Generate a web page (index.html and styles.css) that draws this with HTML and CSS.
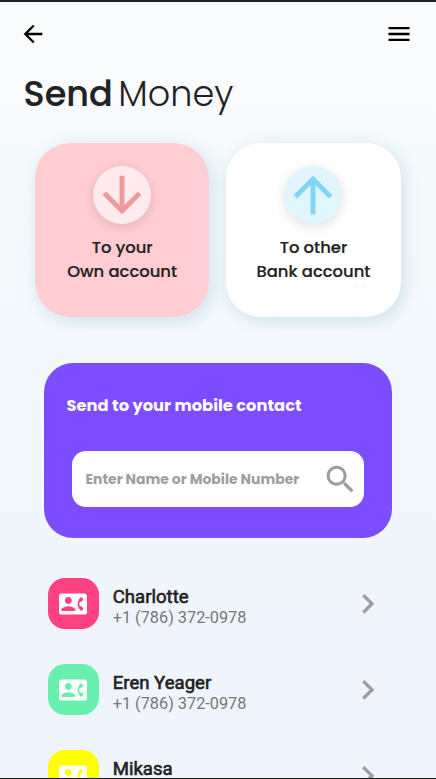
FILE: index.html
```html
<!DOCTYPE html>
<html lang="en">
<head>
<meta charset="utf-8">
<title>Send Money</title>
<link rel="stylesheet" href="styles.css">
</head>
<body>
<svg width="0" height="0" class="sprite">
  <symbol id="contact" viewBox="0 0 24 24"><path d="M22 3H2C.9 3 0 3.9 0 5v14c0 1.1.9 2 2 2h20c1.1 0 1.99-.9 1.99-2L24 5c0-1.1-.9-2-2-2zM8 6c1.66 0 3 1.34 3 3s-1.34 3-3 3-3-1.34-3-3 1.34-3 3-3zm6 12H2v-1c0-2 4-3.1 6-3.1s6 1.1 6 3.1v1zm3.85-4h1.64L21 16l-1.99 1.99c-1.31-.98-2.28-2.38-2.73-3.99-.18-.64-.28-1.31-.28-2s.1-1.36.28-2c.45-1.62 1.42-3.01 2.73-3.99L21 8l-1.51 2h-1.64c-.22.63-.35 1.3-.35 2s.13 1.37.35 2z"/></symbol>
  <symbol id="chevron" viewBox="0 0 24 24"><path d="M10 6 8.59 7.41 13.17 12l-4.58 4.59L10 18l6-6z"/></symbol>
</svg>
<main class="screen">
  <header class="bar">
    <svg class="bar-icon" viewBox="0 0 24 24"><path d="M20 11H7.83l5.59-5.59L12 4l-8 8 8 8 1.41-1.41L7.83 13H20v-2z"/></svg>
    <svg class="bar-icon" viewBox="0 0 24 24"><path d="M3 18h18v-2H3v2zm0-5h18v-2H3v2zm0-7v2h18V6H3z"/></svg>
  </header>
  <h1 class="title"><span class="strong">Send</span><span class="light">Money</span></h1>
  <section class="cards">
    <div class="card pink">
      <div class="disc"><svg viewBox="0 0 24 24"><path d="M20 12l-1.41-1.41L13 16.17V4h-2v12.17l-5.58-5.59L4 12l8 8 8-8z"/></svg></div>
      <p class="label"><span>To your</span><span>Own account</span></p>
    </div>
    <div class="card white">
      <div class="disc"><svg viewBox="0 0 24 24"><path d="M4 12l1.41 1.41L11 7.83V20h2V7.83l5.58 5.59L20 12l-8-8-8 8z"/></svg></div>
      <p class="label"><span>To other</span><span>Bank account</span></p>
    </div>
  </section>
  <section class="panel">
    <h2 class="panel-title">Send to your mobile contact</h2>
    <div class="search">
      <span class="hint">Enter Name or Mobile Number</span>
      <svg class="search-icon" viewBox="0 0 24 24"><path d="M15.5 14h-.79l-.28-.27C15.41 12.59 16 11.11 16 9.5 16 5.91 13.09 3 9.5 3S3 5.91 3 9.5 5.91 16 9.5 16c1.61 0 3.09-.59 4.23-1.57l.27.28v.79l5 4.99L20.49 19l-4.99-5zm-6 0C7.01 14 5 11.99 5 9.5S7.01 5 9.5 5 14 7.01 14 9.5 11.99 14 9.5 14z"/></svg>
    </div>
  </section>
  <ul class="contacts">
    <li class="contact">
      <div class="avatar rose"><svg><use href="#contact"/></svg></div>
      <div class="who"><span class="name">Charlotte</span><span class="phone">+1 (786) 372-0978</span></div>
      <svg class="chevron"><use href="#chevron"/></svg>
    </li>
    <li class="contact">
      <div class="avatar mint"><svg><use href="#contact"/></svg></div>
      <div class="who"><span class="name">Eren Yeager</span><span class="phone">+1 (786) 372-0978</span></div>
      <svg class="chevron"><use href="#chevron"/></svg>
    </li>
    <li class="contact">
      <div class="avatar yellow"><svg><use href="#contact"/></svg></div>
      <div class="who"><span class="name">Mikasa</span></div>
      <svg class="chevron"><use href="#chevron"/></svg>
    </li>
  </ul>
</main>
</body>
</html>
```
FILE: styles.css
```css
* { box-sizing: border-box; margin: 0; padding: 0; }
html, body { height: 100%; overflow: hidden; }
body { font-family: Poppins, Inter, "Liberation Sans", sans-serif; color: #222; }
svg { display: block; flex: none; }
.sprite { position: absolute; }
.screen {
  width: 436px;
  height: 779px;
  overflow: hidden;
  display: flex;
  flex-direction: column;
  border-top: 2px solid #222226;
  border-bottom: 1px solid #1c1c1c;
  background: linear-gradient(#fafbfd 0, #f9fbfd 95px, #f4f9fc 150px, #f3f8fc 430px, #f0f5fd 620px, #eff4fd 100%);
}
.bar { display: flex; justify-content: space-between; padding: 18.3px 23.5px 0 18.5px; height: 47px; flex: none; }
.bar-icon { width: 28px; height: 28px; fill: #000; }
.title { display: flex; height: 93.5px; flex: none; padding: 23px 0 0 23.5px; font-size: 35px; line-height: 44px; white-space: nowrap; }
.strong { font-weight: 500; width: 94.8px; -webkit-text-stroke: .2px #222; }
.light { font-weight: 300; }
.cards { display: flex; gap: 17px; padding-left: 35px; flex: none; }
.card {
  width: 174.3px;
  height: 174.5px;
  border-radius: 35px;
  display: flex;
  flex-direction: column;
  align-items: center;
  padding-top: 23.5px;
  box-shadow: 3px 4px 16px rgba(120, 175, 195, .3);
}
.pink { background: linear-gradient(90deg, #ffcdd2 88%, #facfd7); }
.white { background: #fff; }
.disc { width: 58px; height: 58px; border-radius: 50%; box-shadow: 0 3px 12px rgba(0, 0, 0, .12); }
.pink .disc { background: #ffebee; fill: #ef9a9a; }
.white .disc { background: #e1f5fe; fill: #81d4fa; }
.label { margin-top: 12px; display: flex; flex-direction: column; align-items: center; font-size: 16.4px; font-weight: 500; -webkit-text-stroke: .2px #222; line-height: 24.3px; white-space: nowrap; }
.panel {
  width: 348.5px;
  height: 174.5px;
  margin: 46px 0 0 43.5px;
  flex: none;
  border-radius: 29px;
  background: #7c4dff;
  padding: 30px 28px 0;
}
.panel-title { margin-left: -5px; font-size: 16.3px; line-height: 25px; font-weight: 700; color: #fff; white-space: nowrap; }
.search {
  width: 292.5px;
  height: 56px;
  margin-top: 33px;
  border-radius: 14px;
  background: #fff;
  display: flex;
  align-items: center;
  justify-content: space-between;
  padding: 0 5px 0 14px;
}
.hint { padding-top: 1px; color: #9e9e9e; font-size: 13.95px; font-weight: 700; white-space: nowrap; }
.search-icon { width: 37px; height: 37px; margin-top: 1px; fill: #9e9e9e; }
.contacts { list-style: none; padding: 40.5px 49px 0 47.7px; display: flex; flex-direction: column; gap: 35px; flex: none; }
.contact { display: flex; height: 51px; align-items: center; }
.avatar { width: 51px; height: 51px; flex: none; border-radius: 17px; display: flex; align-items: center; padding-left: 11px; fill: #fff; }
.avatar svg { width: 28px; height: 28px; }
.rose { background: #ff4081; }
.mint { background: #69f0ae; }
.yellow { background: #ff0; }
.who { align-self: flex-start; flex: 1; padding: 8px 0 0 14px; display: flex; flex-direction: column; font-family: Roboto, sans-serif; white-space: nowrap; }
.name { font-size: 18.6px; line-height: 22px; font-weight: 400; -webkit-text-stroke: .6px #222; }
.phone { font-size: 16.3px; line-height: 19px; color: #77787b; }
.chevron { width: 39.5px; height: 39.5px; fill: #9e9e9e; }
```
